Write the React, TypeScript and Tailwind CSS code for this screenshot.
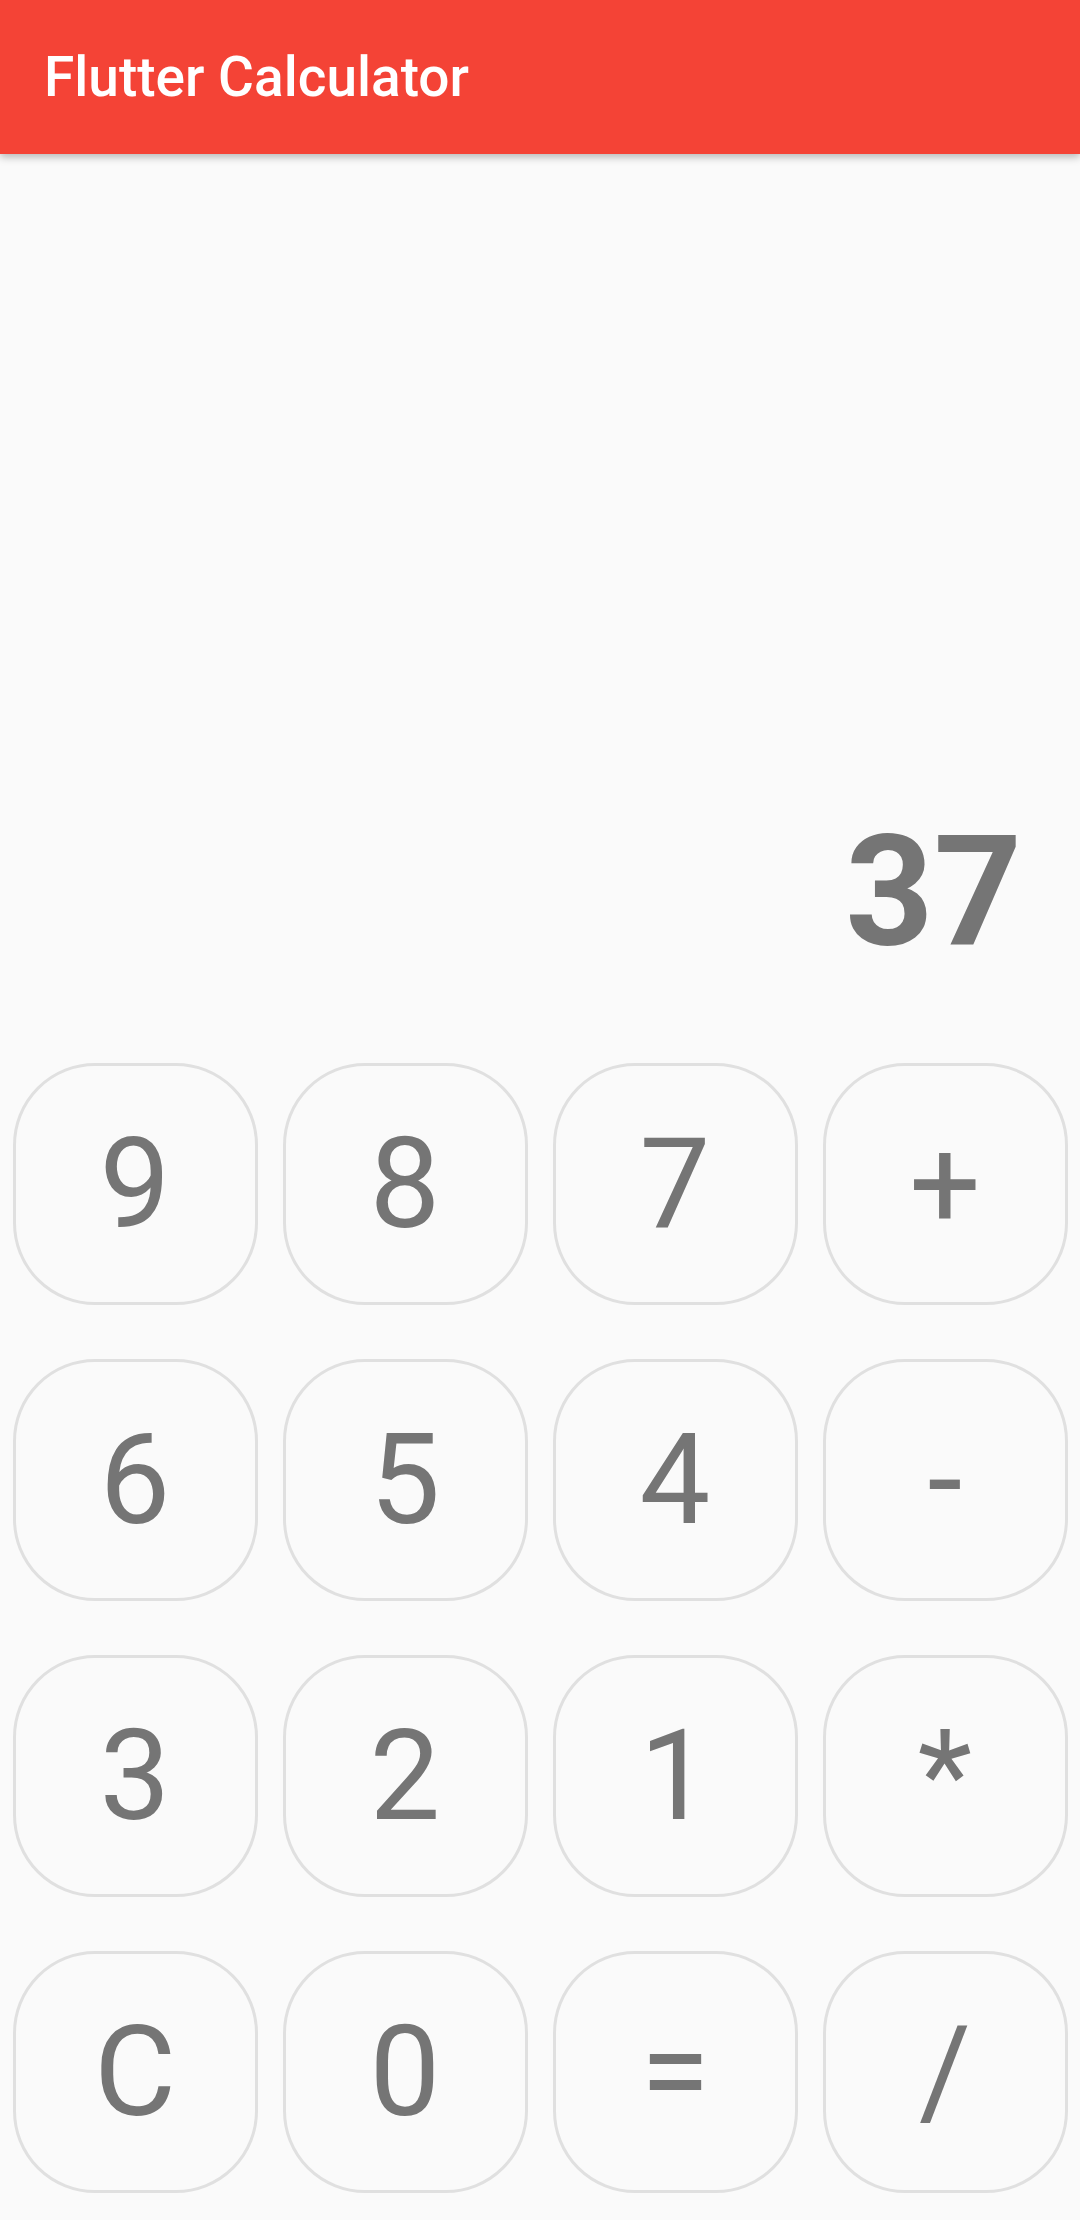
const rows: string[][] = [
  ["9", "8", "7", "+"],
  ["6", "5", "4", "-"],
  ["3", "2", "1", "*"],
  ["C", "0", "=", "/"],
];

function CalcButton({ label }: { label: string }) {
  return (
    <div className="flex h-full w-full items-center justify-center px-[12.5px] py-[27px]">
      <button
        className="flex h-full w-full items-center justify-center rounded-[82px] border-[3px] border-[#e0e0e0] bg-[#fafafa] text-[126px] leading-none text-[#757575]"
        style={{ fontFamily: "Roboto, sans-serif" }}
        type="button"
      >
        {label}
      </button>
    </div>
  );
}

export default function App() {
  return (
    <div
      className="flex h-[2220px] w-[1080px] flex-col overflow-hidden bg-[#fafafa]"
      style={{ fontFamily: "Roboto, sans-serif" }}
    >
      <header className="relative z-10 flex h-[154px] shrink-0 items-center bg-[#f44336] pl-[44px] shadow-[0_3px_8px_rgba(0,0,0,0.28)]">
        <h1 className="text-[55px] font-medium leading-none text-white">
          Flutter Calculator
        </h1>
      </header>

      <div className="flex flex-1 items-end justify-end pb-[66px] pr-[58px]">
        <span className="text-[154px] font-bold leading-none text-[#757575]">
          37
        </span>
      </div>

      <div className="flex shrink-0 flex-col">
        {rows.map((row, r) => (
          <div className="flex h-[296px]" key={r}>
            {row.map((label) => (
              <div className="flex-1" key={label}>
                <CalcButton label={label} />
              </div>
            ))}
          </div>
        ))}
      </div>
    </div>
  );
}
